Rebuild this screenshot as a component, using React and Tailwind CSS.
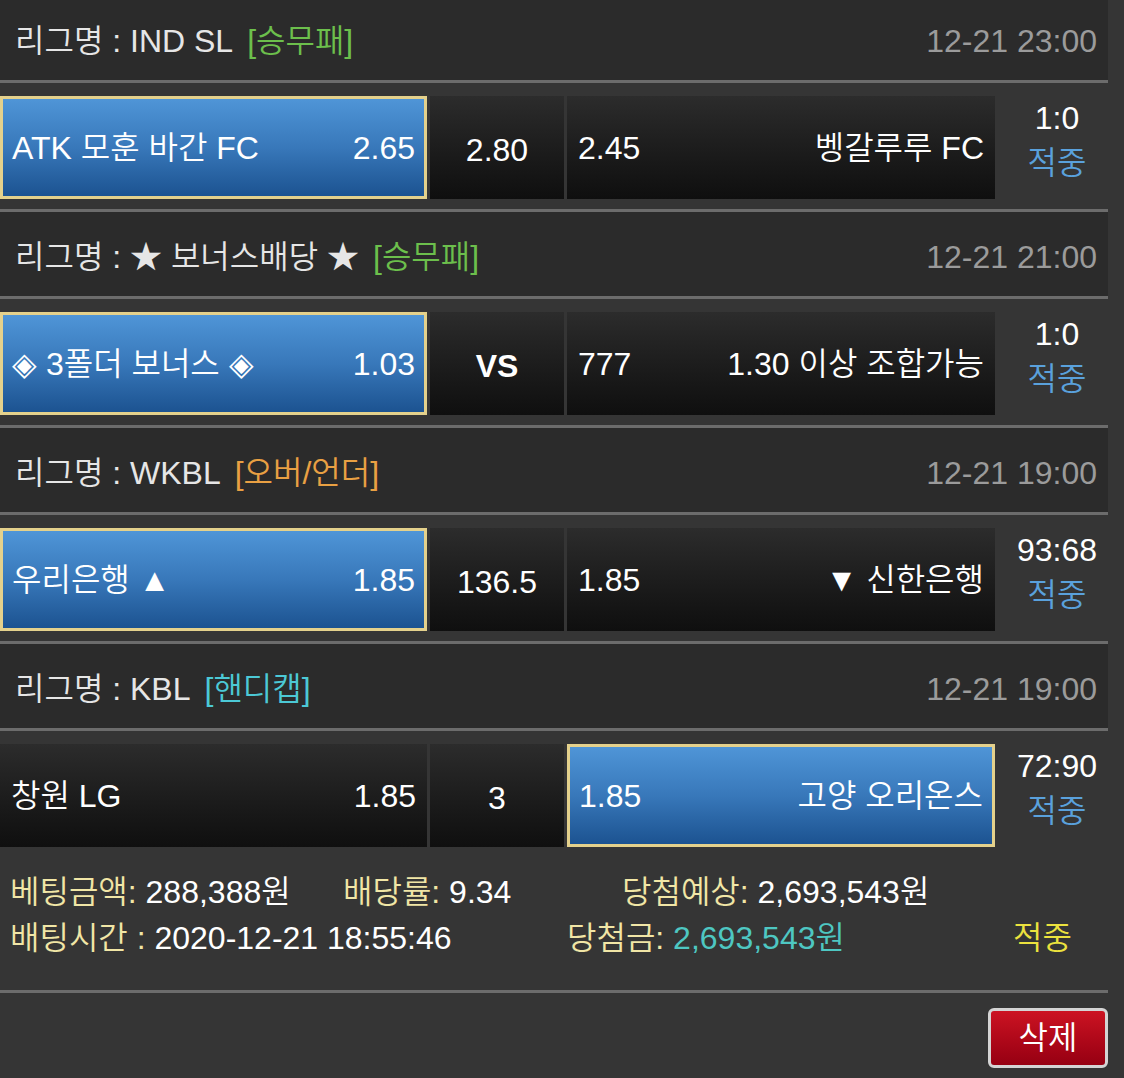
import React from "react";

// Bet slip detail: per-match rows followed by the bet summary
const matches = [
  {
    league: "IND SL",
    type: "[승무패]",
    typeColor: "text-[#6cbf4c]",
    date: "12-21 23:00",
    home: "ATK 모훈 바간 FC",
    homeOdds: "2.65",
    mid: "2.80",
    awayOdds: "2.45",
    away: "벵갈루루 FC",
    score: "1:0",
    pick: "home",
  },
  {
    league: "★ 보너스배당 ★",
    type: "[승무패]",
    typeColor: "text-[#6cbf4c]",
    date: "12-21 21:00",
    home: "◈ 3폴더 보너스 ◈",
    homeOdds: "1.03",
    mid: "VS",
    midBold: true,
    awayOdds: "777",
    away: "1.30 이상 조합가능",
    score: "1:0",
    pick: "home",
  },
  {
    league: "WKBL",
    type: "[오버/언더]",
    typeColor: "text-[#e9a043]",
    date: "12-21 19:00",
    home: "우리은행 ▲",
    homeOdds: "1.85",
    mid: "136.5",
    awayOdds: "1.85",
    away: "▼ 신한은행",
    score: "93:68",
    pick: "home",
  },
  {
    league: "KBL",
    type: "[핸디캡]",
    typeColor: "text-[#4cc9d6]",
    date: "12-21 19:00",
    home: "창원 LG",
    homeOdds: "1.85",
    mid: "3",
    awayOdds: "1.85",
    away: "고양 오리온스",
    score: "72:90",
    pick: "away",
  },
];

function OddsCell({ selected, className, children }) {
  return (
    <div
      className={
        "h-[103px] flex items-center justify-between " +
        (selected
          ? "bg-gradient-to-b from-[#4f95d7] via-[#3878ba] to-[#1c5391] border-[3px] border-[#e4d18c] px-[9px] "
          : "bg-gradient-to-b from-[#2c2c2c] to-[#0f0f0f] px-[11px] ") +
        className
      }
    >
      {children}
    </div>
  );
}

function MatchSection({ m, first, last }) {
  return (
    <div>
      {/* League header */}
      <div
        className={
          "flex items-center justify-between bg-[#2b2b2b] border-b-[3px] border-[#6c6c6c] pl-[15px] pr-[11px] " +
          (first ? "h-[83px] pt-[2px]" : "h-[87px] pt-[6px]")
        }
      >
        <div className="text-[#e6e6e6]">
          리그명 : {m.league}
          <span className={"ml-[14px] " + m.typeColor}>{m.type}</span>
        </div>
        <div className="text-[#9b9b9b]">{m.date}</div>
      </div>

      {/* Match row */}
      <div
        className={
          "flex pt-[13px] " + (last ? "" : "pb-[10px] border-b-[3px] border-[#6c6c6c]")
        }
      >
        <OddsCell selected={m.pick === "home"} className="w-[427px]">
          <span>{m.home}</span>
          <span>{m.homeOdds}</span>
        </OddsCell>
        <div className="ml-[3px] w-[134px] h-[103px] flex items-center justify-center pt-[4px] bg-gradient-to-b from-[#2c2c2c] to-[#0f0f0f]">
          <span className={m.midBold ? "font-bold" : ""}>{m.mid}</span>
        </div>
        <OddsCell selected={m.pick === "away"} className="ml-[3px] w-[428px]">
          <span>{m.awayOdds}</span>
          <span>{m.away}</span>
        </OddsCell>
        <div className="w-[113px] h-[103px] flex flex-col items-center justify-center pl-[11px] pb-[14px] leading-[45px]">
          <span>{m.score}</span>
          <span className="text-[#5aa1dc]">적중</span>
        </div>
      </div>
    </div>
  );
}

export default function App() {
  return (
    <div
      className="w-[1124px] h-[1078px] overflow-hidden bg-[#353535] text-white text-[32px] font-[350] leading-none"
      style={{ fontFamily: '"Liberation Sans", "Noto Sans CJK KR", sans-serif' }}
    >
      <div className="w-[1108px]">
        {matches.map((m, i) => (
          <MatchSection key={i} m={m} first={i === 0} last={i === matches.length - 1} />
        ))}

        {/* Bet summary */}
        <div className="pt-[22px] pb-[29px] pl-[10px] border-b-[3px] border-[#6c6c6c] leading-[46px]">
          <div className="flex">
            <div className="w-[333px]">
              <span className="text-[#f1e6a6]">베팅금액: </span>288,388원
            </div>
            <div className="w-[279px]">
              <span className="text-[#f1e6a6]">배당률: </span>9.34
            </div>
            <div>
              <span className="text-[#f1e6a6]">당첨예상: </span>2,693,543원
            </div>
          </div>
          <div className="flex">
            <div className="w-[557px]">
              <span className="text-[#f1e6a6]">배팅시간 : </span>2020-12-21 18:55:46
            </div>
            <div className="w-[446px]">
              <span className="text-[#f1e6a6]">당첨금: </span>
              <span className="text-[#4ec7c2]">2,693,543원</span>
            </div>
            <div className="text-[#ece23e]">적중</div>
          </div>
        </div>

        <div className="flex justify-end pt-[15px]">
          <button className="w-[120px] h-[60px] rounded-[6px] border-[3px] border-[#d4d4d4] bg-gradient-to-b from-[#cc1322] to-[#960012] text-white text-[32px] flex items-center justify-center">
            삭제
          </button>
        </div>
      </div>
    </div>
  );
}
